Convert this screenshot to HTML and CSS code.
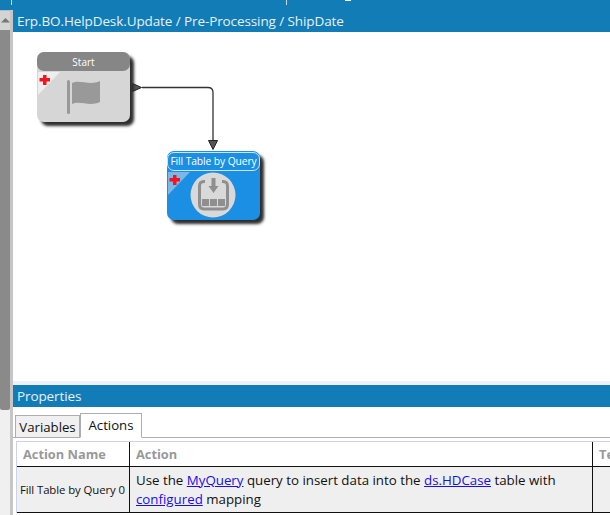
FILE: index.html
```html
<!DOCTYPE html>
<html lang="en">
<head>
<meta charset="utf-8">
<title>Workflow Designer</title>
<link rel="stylesheet" href="styles.css">
</head>
<body>
<div class="app">
  <div class="topstrip"><i class="tick tick-a"></i><i class="tick tick-b"></i><i class="nub"></i></div>
  <div class="body">
    <aside class="side">
      <div class="scroll">
        <div class="scroll-up"><svg width="9" height="5" viewBox="0 0 9 5"><path d="M0 4.500 4.500 0 9 4.500Z" fill="#777"/></svg></div>
        <div class="scroll-thumb"></div>
      </div>
    </aside>
    <main class="main">
      <div class="titlebar">Erp.BO.HelpDesk.Update / Pre-Processing / ShipDate</div>
      <section class="canvas">
        <svg class="wire" width="597" height="349" viewBox="0 0 597 349">
          <path class="line" d="M129 55.500H195Q200 55.500 200 60.500V110"/>
          <path class="head" d="M119.500 51.500 128.500 55.500 119.500 59.500Z"/>
          <path class="head" d="M195.500 108.500H204.500L200 117.500Z"/>
        </svg>
        <div class="node node-start">
          <div class="node-head">Start</div>
          <div class="node-body">
            <svg class="corner" width="22" height="23" viewBox="0 0 22 23"><path d="M0 0H22L0 23Z" fill="#eeeeee"/><path d="M5 3H8.500V6H12V9.500H8.500V13H5V9.500H1.500V6H5Z" fill="#f5141e"/></svg>
            <svg class="glyph" width="36" height="36" viewBox="0 0 36 36"><rect x="0" y="0" width="3" height="34" rx="1.500" fill="#999"/><path d="M5 3C13 -1 22 6 33 1V22C22 27 13 20 5 24Z" fill="#999"/></svg>
          </div>
        </div>
        <div class="node node-fill">
          <div class="node-head">Fill Table by Query</div>
          <div class="node-body">
            <svg class="corner" width="22" height="23" viewBox="0 0 22 23"><path d="M0 0H22L0 23Z" fill="#79b8e8"/><path d="M5 3H8.500V6H12V9.500H8.500V13H5V9.500H1.500V6H5Z" fill="#f5141e"/></svg>
            <svg class="glyph-round" width="46" height="46" viewBox="0 0 46 46">
              <circle cx="23" cy="23" r="22.500" fill="#d9d9d9"/>
              <path d="M15 9.500H14Q9.500 9.500 9.500 14V32Q9.500 37 14 37H33Q37.500 37 37.500 32V14Q37.500 9.500 33 9.500H32" fill="none" stroke="#8f8f8f" stroke-width="3"/>
              <path d="M21.500 6H25.500V14H28.500L23.500 21 18.500 14H21.500Z" fill="#8f8f8f"/>
              <rect x="12" y="27" width="7" height="7" fill="#8f8f8f"/><rect x="20" y="27" width="7" height="7" fill="#8f8f8f"/><rect x="28" y="27" width="7" height="7" fill="#8f8f8f"/>
            </svg>
          </div>
        </div>
      </section>
      <div class="divider"></div>
      <div class="titlebar">Properties</div>
      <div class="tabs">
        <div class="tab">Variables</div>
        <div class="tab tab-active">Actions</div>
      </div>
      <div class="grid">
        <div class="cell head-cell">Action Name</div>
        <div class="cell head-cell">Action</div>
        <div class="cell head-cell last">Te</div>
        <div class="cell row-cell name-cell">Fill Table by Query 0</div>
        <div class="cell row-cell action-cell"><span>Use the <a href="#">MyQuery</a> query to insert data into the <a href="#">ds.HDCase</a> table with <a href="#">configured</a> mapping</span></div>
        <div class="cell row-cell last"></div>
      </div>
    </main>
  </div>
</div>
</body>
</html>
```
FILE: styles.css
```css
* { box-sizing: border-box; }
html, body { margin: 0; padding: 0; }
body { width: 610px; height: 515px; overflow: hidden; background: #fff; font-family: "Open Sans", "Noto Sans", sans-serif; }
.app { width: 610px; height: 515px; display: flex; flex-direction: column; }
.topstrip { height: 10px; background: #127cb7; position: relative; flex: none; }
.tick { position: absolute; top: 0; width: 1px; height: 5px; background: #c9d9e4; }
.tick-a { left: 11px; }
.tick-b { left: 286px; }
.nub { position: absolute; top: 0; left: 345px; width: 6px; height: 1px; background: #fff; }
.body { flex: 1; display: flex; min-height: 0; }
.side { width: 13px; flex: none; background: #fff; }
.scroll { width: 13px; height: 100%; background: #f0f0f0; border-right: 3px solid #c6c6c6; }
.scroll-up { height: 20px; display: flex; justify-content: center; align-items: center; background: #d4d4d4; border-top: 1px solid #bbb; }
.scroll-thumb { height: 380px; background: #8a8a8a; border-radius: 0 0 2px 2px; }
.main { flex: 1; min-width: 0; display: flex; flex-direction: column; }
.titlebar { height: 22px; flex: none; background: #127cb7; color: #e8f1f7; font-size: 13.500px; line-height: 22px; padding-left: 4px; white-space: nowrap; letter-spacing: -0.1px; }
.canvas { height: 349px; flex: none; position: relative; background: #fff; overflow: hidden; }
.wire { position: absolute; left: 0; top: 0; }
.wire path { fill: none; }
.wire .line { stroke: #333; stroke-width: 1.300; }
.wire .head { fill: #555; stroke: #222; stroke-width: 1; }
.node { position: absolute; width: 93px; border-radius: 7px; box-shadow: 4px 4px 3px #2e2e2e; }
.node-start { left: 24px; top: 20px; height: 70px; background: #d6d6d6; }
.node-fill { left: 154px; top: 119px; height: 69px; background: #1a8fe3; }
.node-head { height: 19px; border-radius: 7px; color: #fff; font-size: 10px; line-height: 20px; text-align: center; white-space: nowrap; }
.node-start .node-head { background: #868686; }
.node-fill .node-head { height: 19px; margin-top: 1px; border: 1px solid #cfe6f8; line-height: 16px; font-size: 10.300px; letter-spacing: -0.1px; }
.node-body { position: relative; height: 50px; }
.corner { position: absolute; left: 1px; top: 1px; }
.glyph { position: absolute; left: 30px; top: 9px; }
.glyph-round { position: absolute; left: 23px; top: 1px; }
.divider { height: 4px; flex: none; background: #eef0fa; }
.tabs { height: 31px; flex: none; display: flex; align-items: flex-end; padding-left: 2px; border-bottom: 1px solid #adadad; margin-bottom: 3px; background: #fff; }
.tab { width: 65px; height: 23px; margin-bottom: -1px; border: 1px solid #adadad; background: #f0f0f0; font-size: 13.200px; line-height: 22px; text-align: center; color: #111; }
.tab-active { width: 62px; height: 25px; background: #fff; border-bottom-color: #fff; margin-bottom: -1px; line-height: 22px; position: relative; }
.grid { margin-left: 3px; display: grid; grid-template-columns: 113px 463px 1fr; grid-template-rows: 25px 46px; border-top: 1px solid #ccd2ec; border-left: 1px solid #ccd2ec; }
.cell { padding-left: 6px; display: flex; align-items: center; overflow: hidden; border-bottom: 1px solid #111; border-right: 1px solid #111; color: #111; }
.cell.last { border-right: 0; white-space: nowrap; }
.head-cell { background: #fff; color: #999; font-size: 12.800px; font-weight: 700; }
.row-cell { background: #efefef; }
.name-cell { padding-left: 3px; font-size: 11.400px; white-space: nowrap; letter-spacing: -0.1px; }
.action-cell { font-size: 13.300px; line-height: 19px; }
.action-cell a { color: #1a0dee; text-decoration: underline; }
```
